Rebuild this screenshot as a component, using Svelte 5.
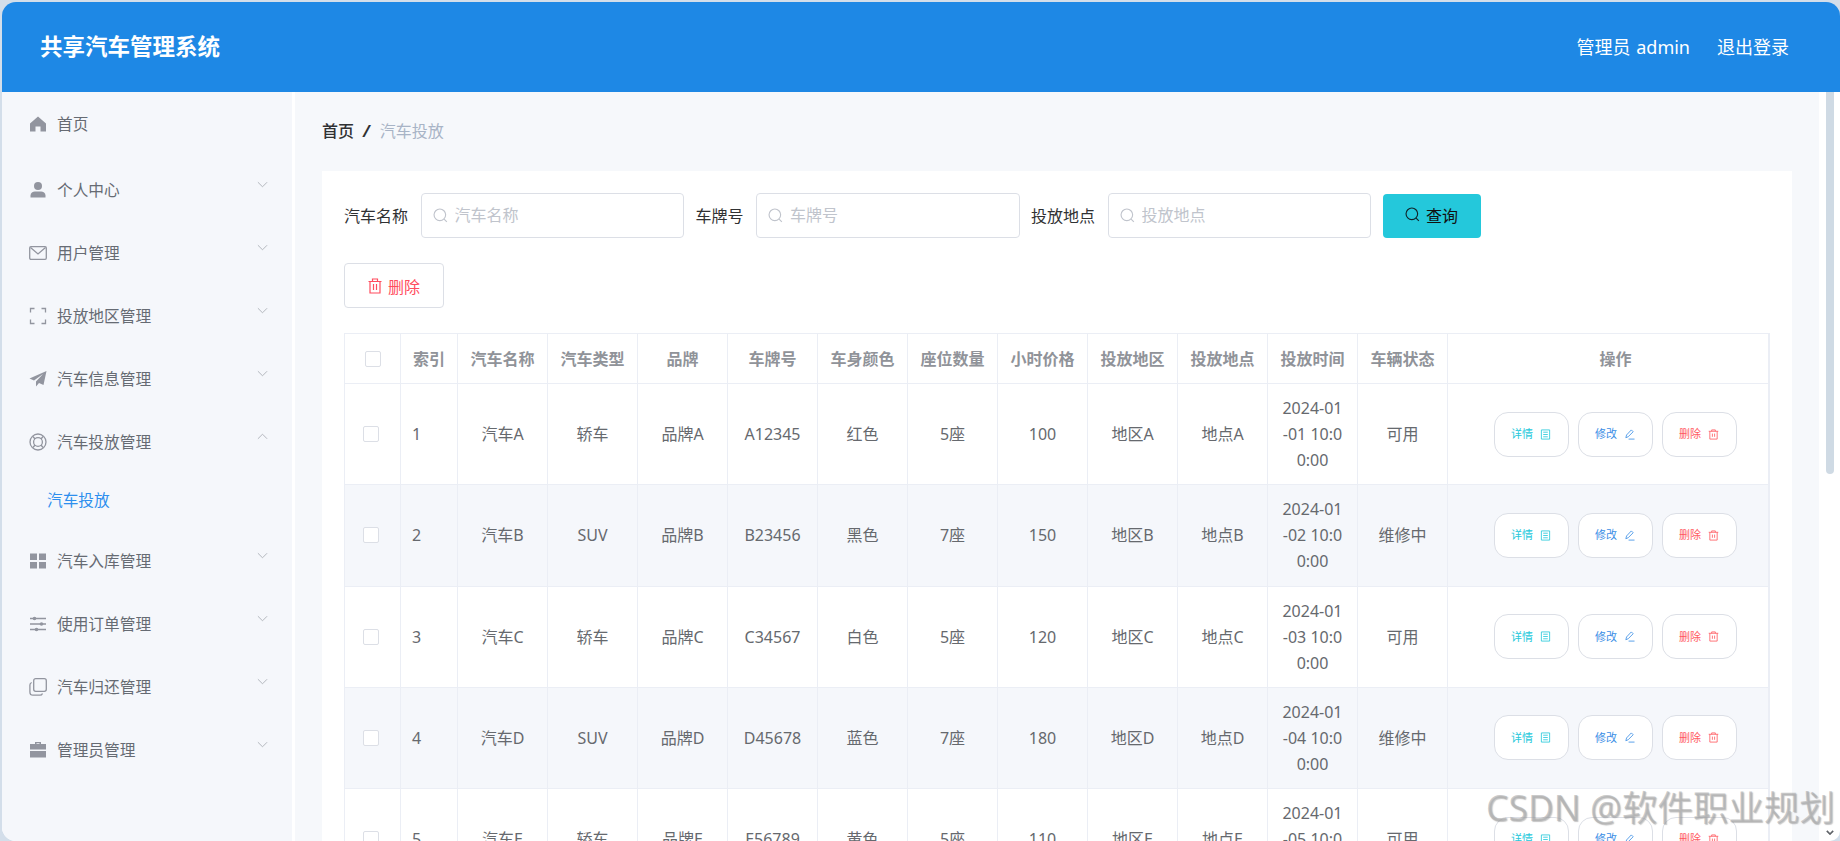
<script>
  const menu = [
    { label: '个人中心', icon: 'user' },
    { label: '用户管理', icon: 'mail' },
    { label: '投放地区管理', icon: 'scan' },
    { label: '汽车信息管理', icon: 'plane' },
    { label: '汽车投放管理', icon: 'ring', open: true, child: '汽车投放' },
    { label: '汽车入库管理', icon: 'grid' },
    { label: '使用订单管理', icon: 'sliders' },
    { label: '汽车归还管理', icon: 'copy' },
    { label: '管理员管理', icon: 'case' }
  ];
  const heads = ['索引', '汽车名称', '汽车类型', '品牌', '车牌号', '车身颜色', '座位数量', '小时价格', '投放地区', '投放地点', '投放时间', '车辆状态'];
  const rows = [
    [1, 'A', '轿车', 'A12345', '红色', '5座', 100, '01', '可用'],
    [2, 'B', 'SUV', 'B23456', '黑色', '7座', 150, '02', '维修中'],
    [3, 'C', '轿车', 'C34567', '白色', '5座', 120, '03', '可用'],
    [4, 'D', 'SUV', 'D45678', '蓝色', '7座', 180, '04', '维修中'],
    [5, 'E', '轿车', 'E56789', '黄色', '5座', 110, '05', '可用']
  ];
  const searches = [
    { label: '汽车名称' },
    { label: '车牌号' },
    { label: '投放地点' }
  ];
</script>

{#snippet navIcon(name)}
  <svg class="nav-icon" viewBox="0 0 18 18" aria-hidden="true">
    {#if name === 'home'}
      <path class="fill" d="M9 1.5 17 8.5V16.5H11.5V11.5H6.5V16.5H1V8.5Z" />
    {:else if name === 'user'}
      <circle class="fill" cx="9" cy="5" r="4" />
      <path class="fill" d="M1.5 16.5V14.5C1.5 11.8 3.8 10.5 6 10.5H12C14.2 10.5 16.5 11.8 16.5 14.5V16.5Z" />
    {:else if name === 'mail'}
      <rect class="line" x=".7" y="2.7" width="16.6" height="12.6" rx="1.2" />
      <path class="line" d="M1.5 3.5 9 10 16.5 3.5" />
    {:else if name === 'scan'}
      <path class="line" d="M5.5 1.5H1.5V5.5M12.5 1.5H16.5V5.5M5.5 16.5H1.5V12.5M12.5 16.5H16.5V12.5" />
    {:else if name === 'plane'}
      <path class="fill" d="M17.5 1 .5 8.5 5 10.5 14 4 7 11.5V16.5L10 13 14.5 15Z" />
    {:else if name === 'ring'}
      <circle class="line" cx="9" cy="9" r="8" />
      <circle class="line" cx="9" cy="9" r="4.4" />
      <path class="line" d="M4 3.5 6 6M14 3.5 12 6M4 14.5 6 12M14 14.5 12 12" />
    {:else if name === 'grid'}
      <path class="fill" d="M1 1.5H8V8H1ZM10 1.5H17V8H10ZM1 10H8V16.5H1ZM10 10H17V16.5H10Z" />
    {:else if name === 'sliders'}
      <path class="line" d="M1 3.5H17M1 9H17M1 14.5H17" />
      <circle class="fill" cx="5.5" cy="3.5" r="1.8" />
      <circle class="fill" cx="12.5" cy="9" r="1.8" />
      <circle class="fill" cx="7.5" cy="14.5" r="1.8" />
    {:else if name === 'copy'}
      <rect class="line" x="4.7" y=".7" width="12.6" height="12.6" rx="2" />
      <path class="line" d="M2.7 4.5C1.5 5 .9 5.8.9 7V14C.9 16 2 17.2 4 17.2H11C12.2 17.2 13 16.6 13.5 15.4" />
    {:else if name === 'case'}
      <path class="fill" d="M6 3V1H12V3H17V8.5H1V3ZM7.5 3H10.5V2.3H7.5ZM1 10H17V16.5H1Z" />
    {/if}
  </svg>
{/snippet}

{#snippet searchIcon()}
  <svg class="search-icon" viewBox="0 0 16 16" aria-hidden="true">
    <circle cx="7.3" cy="7.3" r="6.2" />
    <path d="M11.8 11.8 14.8 14.8" />
  </svg>
{/snippet}

{#snippet trashIcon()}
  <svg class="trash" viewBox="0 0 14 16" aria-hidden="true">
    <path d="M.5 3.5H13.5M4.5 3.5V1H9.5V3.5M2 3.5V15H12V3.5M5.5 6V12M8.5 6V12" />
  </svg>
{/snippet}

<div class="frame">
  <header class="topbar">
    <div class="title">共享汽车管理系统</div>
    <div class="account">
      <span class="who">管理员 admin</span>
      <span>退出登录</span>
    </div>
  </header>

  <div class="body">
    <aside class="sidebar">
      <div class="item first">
        {@render navIcon('home')}
        <span class="item-label">首页</span>
      </div>
      {#each menu as m}
        <div class="item">
          {@render navIcon(m.icon)}
          <span class="item-label">{m.label}</span>
          <svg class="chev" class:open={m.open} viewBox="0 0 12 7" aria-hidden="true"><path d="M1 1 6 6 11 1" /></svg>
        </div>
        {#if m.child}
          <div class="sub">{m.child}</div>
        {/if}
      {/each}
    </aside>

    <main class="main">
      <nav class="crumbs">
        <b>首页</b>
        <i>/</i>
        <span>汽车投放</span>
      </nav>

      <section class="card">
        <div class="search">
          {#each searches as s}
            <label class="field">
              <span class="field-label">{s.label}</span>
              <span class="input">
                {@render searchIcon()}
                <input placeholder={s.label} />
              </span>
            </label>
          {/each}
          <button class="query">{@render searchIcon()}查询</button>
        </div>

        <button class="remove">{@render trashIcon()}删除</button>

        <table>
          <colgroup>
            <col class="c-check" />
            <col class="c-index" />
            {#each Array(11) as _}<col class="c-data" />{/each}
            <col />
          </colgroup>
          <thead>
            <tr>
              <th><span class="check head-check"></span></th>
              {#each heads as h}<th>{h}</th>{/each}
              <th class="ops">操作</th>
            </tr>
          </thead>
          <tbody>
            {#each rows as r, i}
              <tr class:alt={i % 2 === 1}>
                <td><span class="check"></span></td>
                <td class="idx">{r[0]}</td>
                <td>汽车{r[1]}</td>
                <td>{r[2]}</td>
                <td>品牌{r[1]}</td>
                <td>{r[3]}</td>
                <td>{r[4]}</td>
                <td>{r[5]}</td>
                <td>{r[6]}</td>
                <td>地区{r[1]}</td>
                <td>地点{r[1]}</td>
                <td class="time">2024-01<br />-{r[7]} 10:0<br />0:00</td>
                <td>{r[8]}</td>
                <td class="ops">
                  <div class="actions">
                    <button class="act detail">详情
                      <svg viewBox="0 0 12 12" aria-hidden="true"><path d="M1.5 1H10.5V11H1.5ZM3.5 3.5H8.5M3.5 6H8.5M3.5 8.5H8.5" /></svg>
                    </button>
                    <button class="act edit">修改
                      <svg viewBox="0 0 12 12" aria-hidden="true"><path d="M8 1 10 3 4.5 8.5 2 9.5 2.8 6.5ZM5 11H11.5" /></svg>
                    </button>
                    <button class="act del">删除
                      <svg viewBox="0 0 12 12" aria-hidden="true"><path d="M.8 2.5H11.2M4 2.5V1H8V2.5M2 2.5V11H10V2.5M4.8 5V8.5M7.2 5V8.5" /></svg>
                    </button>
                  </div>
                </td>
              </tr>
            {/each}
          </tbody>
        </table>
      </section>
    </main>

    <div class="rail">
      <div class="thumb"></div>
      <svg class="rail-arrow" viewBox="0 0 10 6" aria-hidden="true"><path d="M1 1 5 5 9 1" /></svg>
    </div>
  </div>

  <div class="mark">CSDN @软件职业规划</div>
</div>

<style>
  :global(body) {
    margin: 0;
    background: #d3deea;
    overflow: hidden;
  }
  .frame {
    position: relative;
    box-sizing: border-box;
    height: 841px;
    padding: 2px 0 0 2px;
    display: flex;
    flex-direction: column;
    overflow: hidden;
    font-family: "Noto Sans", "Noto Sans CJK SC", sans-serif;
    font-size: 16px;
    color: #606266;
  }
  .topbar {
    flex: none;
    height: 90px;
    box-sizing: border-box;
    padding: 0 51px 0 38px;
    display: flex;
    align-items: center;
    justify-content: space-between;
    background: #1e88e5;
    color: #fff;
    border-radius: 14px 14px 0 0;
  }
  .title {
    font-size: 22.5px;
    font-weight: 700;
    line-height: 30px;
  }
  .account {
    display: flex;
    gap: 27px;
    font-size: 18px;
    line-height: 26px;
  }
  .who {
    word-spacing: 1px;
  }
  .body {
    flex: 1;
    min-height: 0;
    display: flex;
    background: #fff;
    border-radius: 0 0 10px 14px;
    overflow: hidden;
  }
  .sidebar {
    flex: none;
    width: 290px;
    margin-right: 3px;
    background: #f5f7fb;
  }
  .item {
    height: 63px;
    box-sizing: border-box;
    padding: 0 24px 0 27px;
    display: flex;
    align-items: center;
    line-height: 22px;
    color: #666b73;
  }
  .item.first {
    height: 64px;
    margin-bottom: 2px;
  }
  .nav-icon {
    flex: none;
    width: 18px;
    height: 18px;
    margin-right: 10px;
  }
  .nav-icon .fill {
    fill: #92959f;
  }
  .nav-icon .line {
    fill: none;
    stroke: #92959f;
    stroke-width: 1.3;
  }
  .item-label {
    flex: 1;
    white-space: nowrap;
    font-size: 15.7px;
  }
  .chev {
    flex: none;
    width: 11px;
    height: 7px;
    margin: 0 0 10px;
    fill: none;
    stroke: #adb1b8;
    stroke-width: 1;
  }
  .chev.open {
    transform: scaleY(-1);
  }
  .sub {
    height: 52px;
    margin-bottom: 4px;
    padding-left: 45px;
    display: flex;
    align-items: center;
    color: #2d8fee;
    font-size: 15.7px;
  }
  .main {
    flex: 1;
    min-width: 0;
    padding: 0 27px;
    background: #f6f8fb;
    overflow: hidden;
  }
  .crumbs {
    height: 79px;
    box-sizing: border-box;
    padding-top: 28px;
    display: flex;
    align-items: flex-start;
    line-height: 22px;
    color: #a8b4c6;
  }
  .crumbs b {
    font-weight: 500;
    color: #303133;
  }
  .crumbs i {
    margin: 0 10px 0 9px;
    font-weight: 700;
    color: #303133;
  }
  .card {
    background: #fff;
    padding: 22px 22px 16px;
    color: #303133;
  }
  .search {
    display: flex;
    align-items: center;
    height: 45px;
  }
  .field {
    display: flex;
    align-items: center;
    margin-right: 11.5px;
  }
  .field-label {
    margin-right: 12.5px;
    white-space: nowrap;
    line-height: 22px;
  }
  .input {
    box-sizing: border-box;
    width: 263.5px;
    height: 45px;
    padding: 0 11px;
    display: flex;
    align-items: center;
    gap: 7px;
    background: #fff;
    border: 1px solid #dcdfe6;
    border-radius: 4px;
  }
  .input input {
    flex: 1;
    min-width: 0;
    padding: 0 0 2px;
    border: 0;
    outline: 0;
    background: none;
    font: inherit;
    color: #606266;
  }
  .input input::placeholder {
    color: #c0c4cc;
    opacity: 1;
  }
  .search-icon {
    flex: none;
    width: 15px;
    height: 15px;
    fill: none;
    stroke: #c0c4cc;
    stroke-width: 1.2;
  }
  .query {
    width: 98px;
    height: 44px;
    padding: 0 0 2px;
    display: flex;
    align-items: center;
    justify-content: center;
    gap: 6px;
    background: #24c8db;
    color: #111;
    border: 0;
    border-radius: 4px;
    font: inherit;
  }
  .query .search-icon {
    stroke: #10242a;
  }
  .remove {
    box-sizing: border-box;
    width: 100px;
    height: 45px;
    margin: 25px 0 25px;
    padding: 0;
    display: flex;
    align-items: center;
    justify-content: center;
    gap: 6px;
    background: #fff;
    color: #ff4d5e;
    border: 1px solid #dcdfe6;
    border-radius: 4px;
    font: inherit;
  }
  .trash {
    width: 14px;
    height: 16px;
    fill: none;
    stroke: #ff4d5e;
    stroke-width: 1.2;
  }
  table {
    width: 1426px;
    table-layout: fixed;
    border-collapse: collapse;
    border: 1px solid #ebeef5;
    border-right-width: 2px;
  }
  .c-check {
    width: 56px;
  }
  .c-index {
    width: 57px;
  }
  .c-data {
    width: 90px;
  }
  th,
  td {
    padding: 0;
    border: 1px solid #ebeef5;
    text-align: center;
    font-size: 16px;
    overflow: hidden;
  }
  th {
    height: 49px;
    font-weight: 700;
    color: #909399;
    line-height: 22px;
  }
  td {
    height: 100.25px;
    line-height: 26px;
    color: #66696e;
  }
  td.idx {
    text-align: left;
    padding-left: 11px;
  }
  .ops {
    padding-left: 15px;
  }
  tr.alt td {
    background: #f5f7fb;
  }
  .check {
    display: block;
    box-sizing: border-box;
    width: 16px;
    height: 16px;
    margin-left: 18px;
    background: #fff;
    border: 1px solid #dcdfe6;
    border-radius: 2px;
  }
  .head-check {
    margin-left: 20px;
  }
  .actions {
    display: flex;
    justify-content: center;
    gap: 9px;
    padding-right: 1px;
  }
  .act {
    box-sizing: border-box;
    width: 75px;
    height: 45px;
    padding: 0;
    display: flex;
    align-items: center;
    justify-content: center;
    gap: 7px;
    background: #fff;
    border: 1px solid #dcdfe6;
    border-radius: 14px;
    font: inherit;
    font-size: 11px;
  }
  .act svg {
    width: 11px;
    height: 11px;
    fill: none;
    stroke: currentColor;
    stroke-width: .9;
  }
  .detail {
    color: #24c8db;
  }
  .edit {
    color: #3a8ee6;
  }
  .del {
    color: #ff5a60;
  }
  .rail {
    flex: none;
    position: relative;
    width: 21px;
    box-sizing: border-box;
    padding-left: 7px;
  }
  .thumb {
    width: 8px;
    height: 382px;
    background: #cfdae4;
    border-radius: 0 0 4px 4px;
  }
  .rail-arrow {
    position: absolute;
    left: 7px;
    bottom: 6px;
    width: 8px;
    height: 5px;
    fill: none;
    stroke: #5f6368;
    stroke-width: 2;
  }
  .mark {
    position: absolute;
    left: 1486px;
    top: 785px;
    font-size: 35.5px;
    line-height: 44px;
    white-space: nowrap;
    color: rgba(170, 170, 170, .6);
    text-shadow: 1px 1px 1px rgba(90, 90, 90, .35);
    pointer-events: none;
  }
</style>
